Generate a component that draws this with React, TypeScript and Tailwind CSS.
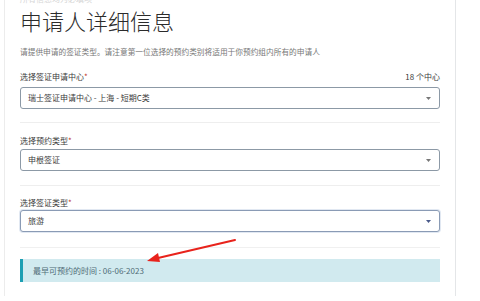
import React from "react";

const font = { fontFamily: '"Noto Sans CJK SC", "Noto Sans", sans-serif' };

function Caret({ blue }: { blue?: boolean }) {
  return (
    <svg width="5" height="3" viewBox="0 0 5 3" className="mr-[8px]">
      <path d="M0 0 L5 0 L2.5 3 Z" fill={blue ? "#4a5a8a" : "#777"} />
    </svg>
  );
}

function Select({ value, focused }: { value: string; focused?: boolean }) {
  return (
    <div
      className={`h-[22px] flex items-center justify-between rounded-[3px] border bg-white pl-[7px] ${
        focused ? "border-[#8a9bb5] shadow-[0_0_0_1px_#e1e8f2]" : "border-[#8c99a6]"
      }`}
    >
      <span className="text-[8px] leading-[10px] text-[#3a3a3a]">{value}</span>
      <Caret blue={focused} />
    </div>
  );
}

function Label({ text, right }: { text: string; right?: string }) {
  return (
    <div className="h-[10px] flex items-center justify-between text-[8px] leading-[10px] text-[#3a3a3a]">
      <span>
        {text}
        <span className="text-[#c0392b]">*</span>
      </span>
      {right && <span>{right}</span>}
    </div>
  );
}

export default function App() {
  return (
    <div className="w-[480px] h-[301px] overflow-hidden bg-white relative" style={font}>
      <div className="ml-[4px] w-[452px] h-[301px] border-l border-r border-l-[#ececec] border-r-[#e4e6e8] pl-[15px] pr-[15px]">
        <div className="-mt-[5px] h-[8px] text-[8px] leading-[8px] text-[#d6d6d6]">所有信息均为必填项</div>
        <div className="mt-[6px] h-[22px] text-[22px] leading-[22px] text-[#2b2b2b] font-light">申请人详细信息</div>
        <div className="mt-[16px] h-[10px] text-[7.7px] leading-[10px] text-[#777] whitespace-nowrap">
          请提供申请的签证类型。请注意第一位选择的预约类别将适用于你预约组内所有的申请人
        </div>
        <div className="mt-[15px]">
          <Label text="选择签证申请中心" right="18 个中心" />
        </div>
        <div className="mt-[5px]">
          <Select value="瑞士签证申请中心 - 上海 - 短期C类" />
        </div>
        <div className="mt-[13px] h-[1px] bg-[#eeeeee]" />
        <div className="mt-[13px]">
          <Label text="选择预约类型" />
        </div>
        <div className="mt-[3px]">
          <Select value="申根签证" />
        </div>
        <div className="mt-[14px] h-[1px] bg-[#eeeeee]" />
        <div className="mt-[12px]">
          <Label text="选择签证类型" />
        </div>
        <div className="mt-[2px]">
          <Select value="旅游" focused />
        </div>
        <div className="mt-[15px] h-[1px] bg-[#f0f0f0]" />
        <div className="mt-[11px] h-[23px] flex items-center bg-[#d1eaef] border-l-[3px] border-l-[#1c9fb3] pl-[10px] text-[8px] leading-[10px] text-[#4f6a75]">
          最早可预约的时间 : 06-06-2023
        </div>
      </div>
      <svg className="absolute left-0 top-0" width="480" height="301" viewBox="0 0 480 301">
        <line x1="235" y1="240" x2="158" y2="258" stroke="#e8231c" strokeWidth="2" strokeLinecap="round" />
        <path d="M147 261 L158 253 L160 262 Z" fill="#e8231c" />
      </svg>
    </div>
  );
}
